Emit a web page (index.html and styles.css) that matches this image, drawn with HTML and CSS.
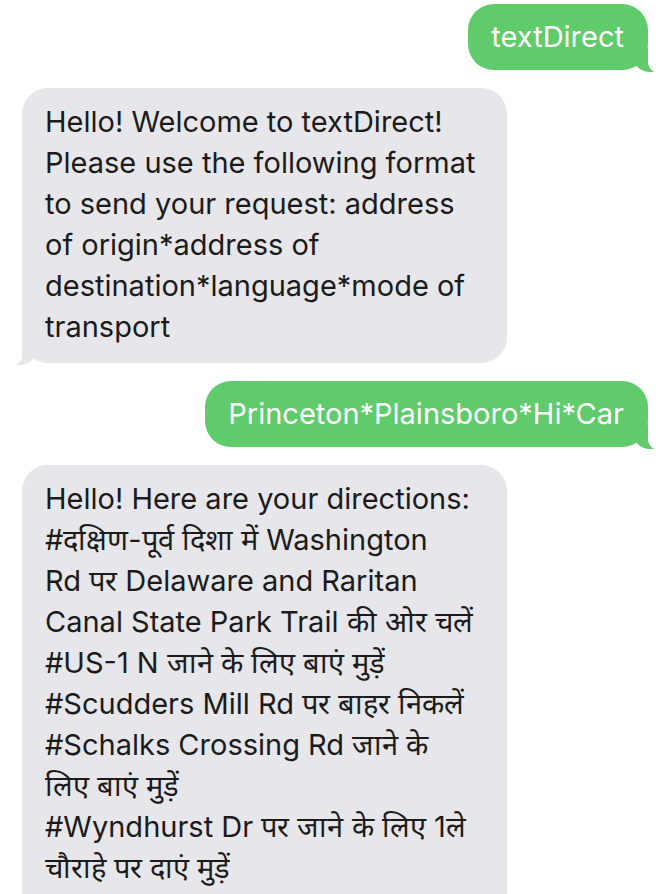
FILE: index.html
```html
<!DOCTYPE html>
<html>
<head>
<meta charset="utf-8">
<link rel="stylesheet" href="styles.css">
</head>
<body>
<div class="thread">
  <div class="bubble sent">textDirect</div>
  <div class="bubble received">Hello! Welcome to textDirect!<br>Please use the following format<br>to send your request: address<br>of origin*address of<br>destination*language*mode of<br>transport</div>
  <div class="bubble sent">Princeton*Plainsboro*Hi*Car</div>
  <div class="bubble received last">Hello! Here are your directions:<br>#दक्षिण-पूर्व दिशा में Washington<br>Rd पर Delaware and Raritan<br>Canal State Park Trail की ओर चलें<br>#US-1 N जाने के लिए बाएं मुड़ें<br>#Scudders Mill Rd पर बाहर निकलें<br>#Schalks Crossing Rd जाने के<br>लिए बाएं मुड़ें<br>#Wyndhurst Dr पर जाने के लिए 1ले<br>चौराहे पर दाएं मुड़ें</div>
</div>
</body>
</html>
```
FILE: styles.css
```css
html, body {
  margin: 0;
  padding: 0;
  background: #ffffff;
}

.thread {
  display: flex;
  flex-direction: column;
  gap: 18px;
  padding: 4px 20px 0 22px;
  font-family: Inter, "Liberation Sans", sans-serif;
  font-size: 29px;
  line-height: 41px;
}

.bubble {
  position: relative;
  border-radius: 26px;
  white-space: nowrap;
}

.sent {
  align-self: flex-end;
  background: #5fcb6b;
  color: #ffffff;
  padding: 12px 24px 13px 23px;
}

.sent::before {
  content: "";
  position: absolute;
  z-index: 0;
  bottom: -2px;
  right: -8px;
  width: 22px;
  height: 24px;
  background: #5fcb6b;
  border-bottom-left-radius: 16px 14px;
}

.sent::after {
  content: "";
  position: absolute;
  z-index: 1;
  bottom: -3px;
  right: -30px;
  width: 30px;
  height: 26px;
  background: #ffffff;
  border-bottom-left-radius: 11px;
}

.received {
  align-self: flex-start;
  background: #e6e6eb;
  color: #1b1b1b;
  width: 485px;
  box-sizing: border-box;
  padding: 13px 20px 16px 23px;
}

.received::before {
  content: "";
  position: absolute;
  z-index: 0;
  bottom: -2px;
  left: -8px;
  width: 22px;
  height: 24px;
  background: #e6e6eb;
  border-bottom-right-radius: 16px 14px;
}

.received::after {
  content: "";
  position: absolute;
  z-index: 1;
  bottom: -3px;
  left: -30px;
  width: 30px;
  height: 26px;
  background: #ffffff;
  border-bottom-right-radius: 11px;
}

.last {
  padding-bottom: 40px;
  border-bottom-left-radius: 0;
  border-bottom-right-radius: 0;
}

.last::before,
.last::after {
  display: none;
}
```
